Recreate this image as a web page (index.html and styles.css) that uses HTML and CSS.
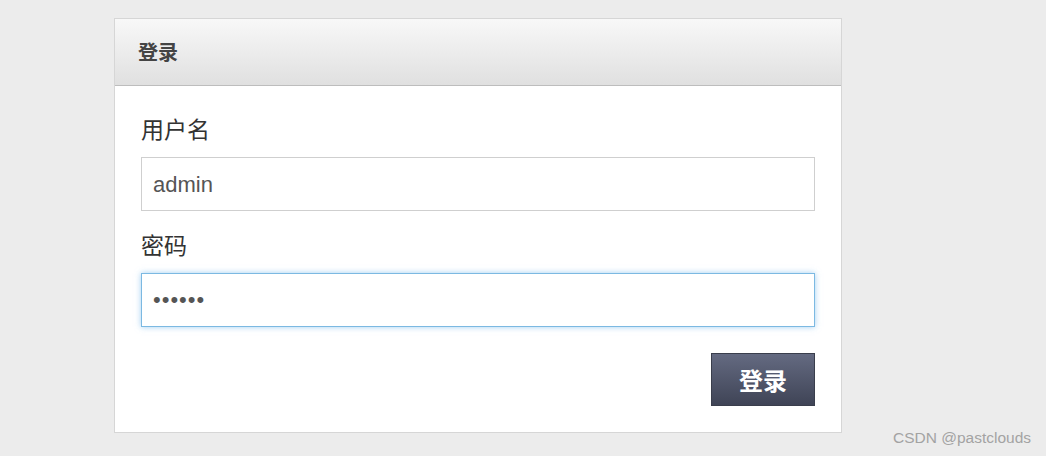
FILE: index.html
```html
<!DOCTYPE html>
<html lang="zh">
<head>
<meta charset="utf-8">
<link rel="stylesheet" href="styles.css">
</head>
<body>
<div class="page">
  <div class="panel">
    <div class="panel-head">登录</div>
    <div class="panel-body">
      <label class="label">用户名</label>
      <div class="input">admin</div>
      <label class="label label-2">密码</label>
      <div class="input input-focus"><span class="dots">••••••</span></div>
      <div class="actions">
        <button class="btn">登录</button>
      </div>
    </div>
  </div>
</div>
<div class="watermark">CSDN @pastclouds</div>
</body>
</html>
```
FILE: styles.css
```css
html, body {
  margin: 0;
  padding: 0;
}
body {
  width: 1046px;
  height: 456px;
  background: #ececec;
  font-family: "Liberation Sans", "Noto Sans CJK SC", sans-serif;
  position: relative;
  overflow: hidden;
}
.page {
  padding: 18px 0 0 114px;
}
.panel {
  width: 726px;
  background: #fff;
  border: 1px solid #d6d6d6;
}
.panel-head {
  height: 66px;
  border-bottom: 1px solid #bdbdbd;
  background: linear-gradient(#f8f8f8, #e0e0e0);
  padding-left: 23px;
  font-size: 20px;
  font-weight: bold;
  color: #444;
  line-height: 68px;
}
.panel-body {
  display: flex;
  flex-direction: column;
  padding: 29px 26px 26px 26px;
}
.label {
  font-size: 23px;
  line-height: 30px;
  color: #333;
  margin-bottom: 12px;
}
.label-2 {
  margin-top: 20px;
}
.input {
  height: 52px;
  border: 1px solid #cfcfcf;
  background: #fff;
  box-sizing: content-box;
  padding-left: 11px;
  font-size: 22px;
  line-height: 54px;
  color: #555;
}
.input-focus {
  border-color: #7cb9e2;
  box-shadow: 0 0 6px rgba(102, 175, 233, 0.6);
}
.dots {
  font-size: 22px;
  letter-spacing: 1px;
  color: #555;
  position: relative;
  top: -1px;
}
.actions {
  display: flex;
  justify-content: flex-end;
  margin-top: 26px;
}
.btn {
  width: 104px;
  height: 53px;
  border: 1px solid #3a3e4c;
  background: linear-gradient(#646a81, #3f4456);
  color: #fff;
  font-family: "Liberation Sans", "Noto Sans CJK SC", sans-serif;
  font-size: 24px;
  font-weight: bold;
  padding: 0;
  border-radius: 0;
}
.watermark {
  position: absolute;
  left: 893px;
  top: 429px;
  font-size: 15.5px;
  color: #a3a3a3;
  font-family: "Liberation Sans", sans-serif;
}
```
